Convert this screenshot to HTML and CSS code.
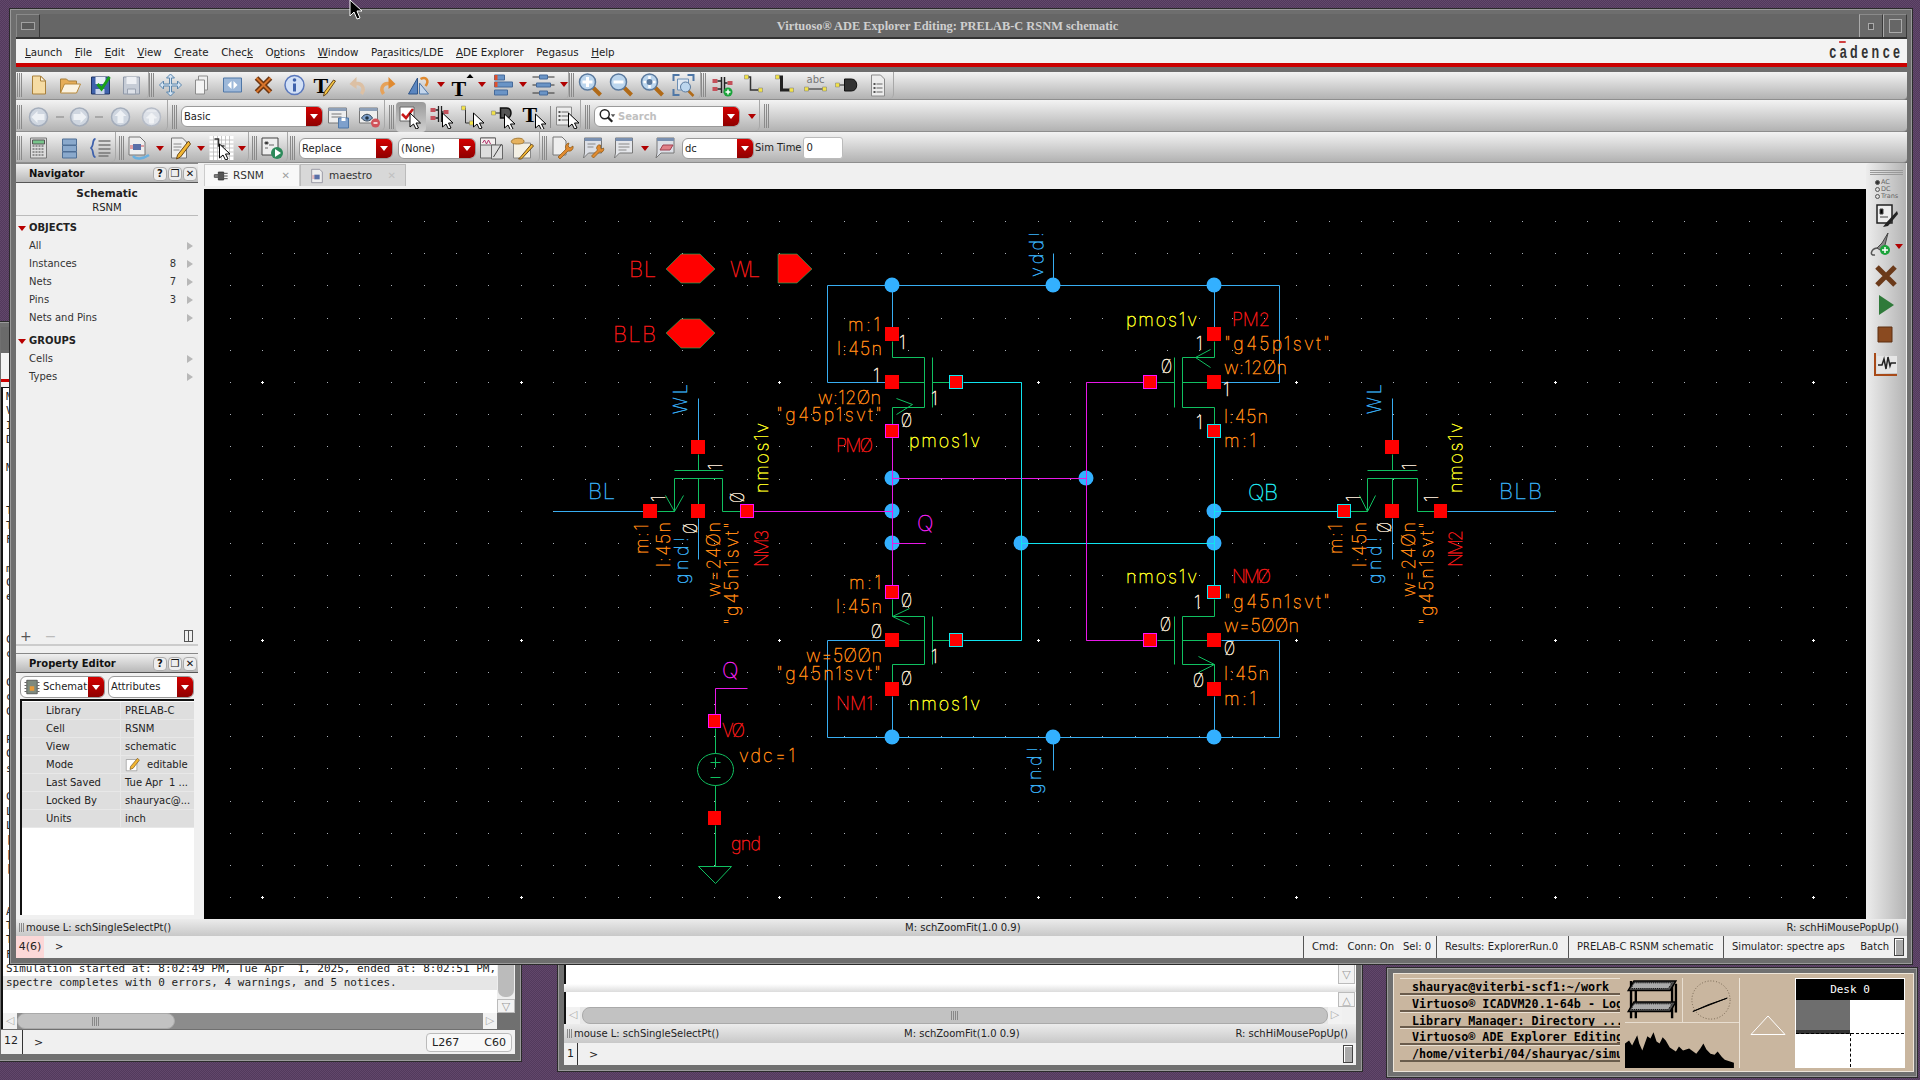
FILE: index.html
```html
<!DOCTYPE html>
<html lang="en">
<head>
<meta charset="utf-8">
<title>Virtuoso ADE Explorer Editing: PRELAB-C RSNM schematic</title>
<link rel="stylesheet" href="styles.css">
</head>
<body>
<svg class="defs" aria-hidden="true">
<symbol id="cur" viewBox="0 0 24 24"><path d="M11 8v14l3.500-3 2.500 5 2.500-1-2.500-5h4.500z" fill="#fff" stroke="#000"/></symbol>
<symbol id="new" viewBox="0 0 24 24"><path d="M6 3h8l5 5v13H6z" fill="#f6dca4" stroke="#a8803c"/><path d="M14 3v5h5z" fill="#fff6e0" stroke="#a8803c"/></symbol>
<symbol id="open" viewBox="0 0 24 24"><path d="M3 20V6h6l2 2h8v4H7z" fill="#e6ad58" stroke="#a8803c"/><path d="M3 20l4-9h16l-4 9z" fill="#fbf3e2" stroke="#b88a3c"/></symbol>
<symbol id="savec" viewBox="0 0 24 24"><path d="M3 4h18v17H3z" fill="#3f62ac" stroke="#1f3566"/><path d="M7 4h10v7H7z" fill="#e8eef8"/><path d="M7 21v-5h9v5z" fill="#c8d4ea"/><path d="M9 11l4 5 8-12" fill="none" stroke="#18a018" stroke-width="3"/></symbol>
<symbol id="saveg" viewBox="0 0 24 24"><path d="M4 4h16v17H4z" fill="#c6ccd6" stroke="#8f98a8"/><path d="M7 4h10v7H7z" fill="#eef0f4"/><path d="M8 21v-5h8v5z" fill="#dde1e8" stroke="#9aa2b0"/></symbol>
<symbol id="move" viewBox="0 0 24 24"><path d="M12 1l4 4h-3v6h6V8l4 4-4 4v-3h-6v6h3l-4 4-4-4h3v-6H5v3l-4-4 4-4v3h6V5H8z" fill="#d6e4f2" stroke="#5b86ad"/></symbol>
<symbol id="copy" viewBox="0 0 24 24"><path d="M9 3h9v14H9z" fill="#eee" stroke="#8c8c8c"/><path d="M6 7h9v14H6z" fill="#f4f4f4" stroke="#8c8c8c"/></symbol>
<symbol id="stretch" viewBox="0 0 24 24"><path d="M3 5h18v14H3z" fill="#9db8d9" stroke="#4f77a6"/><path d="M11 8v8l-4-4zM13 8v8l4-4z" fill="#fff"/></symbol>
<symbol id="del" viewBox="0 0 24 24"><path d="M5 5l14 14M19 5L5 19" stroke="#6b3410" stroke-width="5"/><path d="M5 5l14 14M19 5L5 19" stroke="#d9742a" stroke-width="2"/></symbol>
<symbol id="info" viewBox="0 0 24 24"><circle cx="12" cy="12" r="9.500" fill="#d2e0f6" stroke="#5a78bc" stroke-width="1.500"/><circle cx="12" cy="7" r="1.800" fill="#3f62ac"/><path d="M10.500 10.500h3v8h-3z" fill="#3f62ac"/></symbol>
<symbol id="tpen" viewBox="0 0 24 24"><text x="0" y="20" class="ict">T</text><path d="M22 8L13 21l-3 2 1-4 9-12z" fill="#f5c542" stroke="#6b4a1a"/></symbol>
<symbol id="undo" viewBox="0 0 24 24"><path d="M17 21c4-6 0-12-7-10" fill="none" stroke="#dcc0a4" stroke-width="3.500"/><path d="M12 4l-7 7 7 5z" fill="#dcc0a4"/></symbol>
<symbol id="redo" viewBox="0 0 24 24"><path d="M8 21c-4-6 0-12 7-10" fill="none" stroke="#e6a25a" stroke-width="3.500"/><path d="M13 4l7 7-7 5z" fill="#e08a30"/></symbol>
<symbol id="rot" viewBox="0 0 24 24"><path d="M2 21L11 5v16z" fill="#5a86c0" stroke="#2f5488"/><path d="M13 21V10l9 11z" fill="#c4d6ec" stroke="#4f77a6"/><path d="M14 6c6-3 9 2 5 7" fill="none" stroke="#e08a30" stroke-width="2.500"/></symbol>
<symbol id="tup" viewBox="0 0 24 24"><text x="2" y="23" class="ict">T</text><path d="M17 5l3.500-4L24 5z"/></symbol>
<symbol id="align" viewBox="0 0 24 24"><path d="M4 2h10v5H4z" fill="#6a94c6" stroke="#466a9a"/><path d="M4 9h18v5H4z" fill="#6a94c6" stroke="#466a9a"/><path d="M4 17h13v5H4z" fill="#6a94c6" stroke="#466a9a"/><path d="M4 2h3v5H4zM4 9h3v5H4z" fill="#e0502c"/></symbol>
<symbol id="dist" viewBox="0 0 24 24"><path d="M1 4h22M1 12h22M1 20h22" stroke="#333"/><path d="M8 2h8v4H8zM5 10h14v4H5zM8 18h8v4H8z" fill="#6a94c6" stroke="#466a9a"/></symbol>
<symbol id="zin" viewBox="0 0 24 24"><path d="M14 14l8 8" stroke="#b06a18" stroke-width="4"/><circle cx="9" cy="9" r="8" fill="#bcd6ee" stroke="#5b7a9e" stroke-width="1.500"/><path d="M4 9h10M9 4v10" stroke="#fff" stroke-width="3"/></symbol>
<symbol id="zout" viewBox="0 0 24 24"><path d="M14 14l8 8" stroke="#b06a18" stroke-width="4"/><circle cx="9" cy="9" r="8" fill="#bcd6ee" stroke="#5b7a9e" stroke-width="1.500"/><path d="M4 9h10" stroke="#fff" stroke-width="3"/></symbol>
<symbol id="zfit" viewBox="0 0 24 24"><path d="M14 14l8 8" stroke="#b06a18" stroke-width="4"/><circle cx="9" cy="9" r="8" fill="#bcd6ee" stroke="#5b7a9e" stroke-width="1.500"/><path d="M9 3v12M3 9h12" stroke="#fff" stroke-width="2.500"/><circle cx="9" cy="9" r="3" fill="#5b7a9e"/></symbol>
<symbol id="zbox" viewBox="0 0 24 24"><path d="M2 8V2h6M16 2h6v6M2 16v6h6" fill="none" stroke="#4f77a6" stroke-width="2"/><path d="M6 6h11v11H6z" fill="#dfe8f2" stroke="#6d8fb5"/><path d="M16 17l6 6" stroke="#b06a18" stroke-width="2.500"/><circle cx="14" cy="14" r="5" fill="#bcd6ee" stroke="#5b7a9e"/></symbol>
<symbol id="inst" viewBox="0 0 24 24"><path d="M2 6h5v4H2zM2 14h5v4H2zM17 8h5v4h-5z" fill="#c4505a"/><path d="M7 8h4v8H7M11 4v16M14 4v16M14 10h3" fill="none" stroke="#222" stroke-width="1.500"/><circle cx="17.500" cy="19" r="4.500" fill="#1aa33a"/><path d="M15 19h5M17.500 16.500v5" stroke="#fff" stroke-width="1.500"/></symbol>
<symbol id="wire" viewBox="0 0 24 24"><path d="M5 4h4v13h8" fill="none" stroke="#333" stroke-width="1.500"/><path d="M3 2h4v4H3zM17 15h4v4h-4z" fill="#f2e24a" stroke="#777" stroke-width=".5"/></symbol>
<symbol id="wirew" viewBox="0 0 24 24"><path d="M5 4h4v13h8" fill="none" stroke="#222" stroke-width="3"/><path d="M3 2h4v4H3zM17 15h4v4h-4z" fill="#f2e24a" stroke="#777" stroke-width=".5"/></symbol>
<symbol id="abc" viewBox="0 0 24 24"><text x="3" y="10" class="ics">abc</text><path d="M3 16h18" stroke="#222"/><path d="M1 14h4v4H1zM19 14h4v4h-4z" fill="#f2e24a" stroke="#777" stroke-width=".5"/></symbol>
<symbol id="pin" viewBox="0 0 24 24"><path d="M3 12h8" stroke="#222"/><path d="M1 10h4v4H1z" fill="#f2e24a" stroke="#777" stroke-width=".5"/><path d="M10 6h7c7 0 7 12 0 12h-7z" fill="#333" stroke="#111"/></symbol>
<symbol id="lst" viewBox="0 0 24 24"><path d="M6 2h9l4 4v17H6z" fill="#ececec" stroke="#8a8a8a"/><path d="M8 10h2v2H8zM8 14h2v2H8zM8 18h2v2H8z" fill="#555"/><path d="M11 11h6M11 15h6M11 19h6" stroke="#666"/></symbol>
<symbol id="navl" viewBox="0 0 24 24"><circle cx="12" cy="12" r="9" fill="#cfd6e0" stroke="#a4adbb" stroke-width="1.500"/><path d="M5 12l6-6v3h7v6h-7v3z" fill="#eef1f5"/></symbol>
<symbol id="navr" viewBox="0 0 24 24"><circle cx="12" cy="12" r="9" fill="#cfd6e0" stroke="#a4adbb" stroke-width="1.500"/><path d="M19 12l-6-6v3H6v6h7v3z" fill="#eef1f5"/></symbol>
<symbol id="navu" viewBox="0 0 24 24"><circle cx="12" cy="12" r="9" fill="#cfd6e0" stroke="#a4adbb" stroke-width="1.500"/><path d="M12 5l-6 6h3v7h6v-7h3z" fill="#eef1f5"/></symbol>
<symbol id="navt" viewBox="0 0 24 24"><circle cx="12" cy="12" r="9" fill="#dde1e8" stroke="#b6bcc7" stroke-width="1.500"/><path d="M7 6h10M12 8l-5 5h3v5h4v-5h3z" fill="#f1f3f6" stroke="#f1f3f6"/></symbol>
<symbol id="dash" viewBox="0 0 12 24"><path d="M2 12h8" stroke="#a8a8a8" stroke-width="2"/></symbol>
<symbol id="wsave" viewBox="0 0 24 24"><path d="M2 3h18v15H2z" fill="#eee" stroke="#777"/><path d="M2 3h18v3H2z" fill="#8ea0b8"/><path d="M5 9h10M5 12h10" stroke="#777"/><path d="M12 13h10v10H12z" fill="#7ea0cc" stroke="#4f77a6"/><path d="M15 13h4v3h-4z" fill="#fff"/></symbol>
<symbol id="weye" viewBox="0 0 24 24"><path d="M2 3h18v15H2z" fill="#eee" stroke="#777"/><path d="M2 3h18v3H2z" fill="#8ea0b8"/><path d="M4 13c3-5 8-5 11 0-3 4-8 4-11 0z" fill="#7ea0cc" stroke="#345"/><circle cx="9.500" cy="13" r="1.800" fill="#234"/><circle cx="18" cy="18" r="4.500" fill="#d0525a"/><path d="M16 18h4" stroke="#fff" stroke-width="1.500"/></symbol>
<symbol id="cchk" viewBox="0 0 24 24"><path d="M1 2h14v14H1z" fill="#fff" stroke="#666"/><path d="M3 9l4 4 7-9" fill="none" stroke="#c81818" stroke-width="2.500"/><use href="#cur" x="0" y="0" width="24" height="24"/></symbol>
<symbol id="cinst" viewBox="0 0 24 24"><path d="M1 3h5v4H1zM1 11h5v4H1zM14 5h5v4h-5z" fill="#c4505a"/><path d="M6 5h3v8H6M9 1v16M12 1v16M12 7h2" fill="none" stroke="#222" stroke-width="1.300"/><use href="#cur" x="2" y="0" width="24" height="24"/></symbol>
<symbol id="cwire" viewBox="0 0 24 24"><path d="M3 3h2v15h7" fill="none" stroke="#333"/><path d="M1 1h4v4H1zM9 16h4v4H9z" fill="#f2e24a" stroke="#777" stroke-width=".5"/><use href="#cur" x="2" y="0" width="24" height="24"/></symbol>
<symbol id="cpin" viewBox="0 0 24 24"><path d="M3 8h7" stroke="#222"/><path d="M0 6h4v4H0z" fill="#f2e24a" stroke="#777" stroke-width=".5"/><path d="M9 3h6c6 0 6 10 0 10H9z" fill="#555" stroke="#111" stroke-width="1.500"/><use href="#cur" x="2" y="1" width="24" height="24"/></symbol>
<symbol id="ct" viewBox="0 0 24 24"><text x="0" y="17" class="ict">T</text><use href="#cur" x="2" y="1" width="24" height="24"/></symbol>
<symbol id="clst" viewBox="0 0 24 24"><path d="M1 2h15v18H1z" fill="#ececec" stroke="#8a8a8a"/><path d="M3 6h2v2H3zM3 10h2v2H3zM3 14h2v2H3z" fill="#555"/><path d="M6 7h7M6 11h7M6 15h7" stroke="#666"/><use href="#cur" x="2" y="0" width="24" height="24"/></symbol>
<symbol id="sch" viewBox="0 0 24 24"><circle cx="9" cy="9" r="6" fill="#fff" stroke="#222" stroke-width="2"/><path d="M13 13l6 6" stroke="#222" stroke-width="3"/><path d="M17 9h6l-3 4z" fill="#555"/></symbol>
<symbol id="calc" viewBox="0 0 24 24"><path d="M4 2h16v20H4z" fill="#dcdcdc" stroke="#777"/><path d="M6 4h12v4H6z" fill="#77c48a" stroke="#555"/><path d="M6 10h12M6 13h12M6 16h12M6 19h12" stroke="#777" stroke-width="1.500" stroke-dasharray="2 1"/></symbol>
<symbol id="dbs" viewBox="0 0 24 24"><path d="M5 3h14v6H5zM5 9.500h14v6H5zM5 16h14v6H5z" fill="#8aa9cc" stroke="#4f6f95"/></symbol>
<symbol id="brace" viewBox="0 0 24 24"><path d="M7 3C3 3 6 11 2 12c4 1 1 9 5 9" fill="none" stroke="#3f62ac" stroke-width="1.800"/><path d="M10 5h12M10 9h12M10 13h12M10 17h12M10 20h10" stroke="#777" stroke-width="1.500"/></symbol>
<symbol id="nets" viewBox="0 0 24 24"><path d="M2 1h11l5 5v13H2z" fill="#eee" stroke="#777"/><path d="M6 8h8v6H6z" fill="#5a70a8"/><path d="M3 10h3M3 12h3M14 10h3" stroke="#d0505a"/><path d="M6 20c3 4 10 3 16-1" fill="none" stroke="#6ab0e0" stroke-width="2.500"/></symbol>
<symbol id="edit" viewBox="0 0 24 24"><path d="M3 2h11l4 4v16H3z" fill="#eee" stroke="#777"/><path d="M5 8h8M5 11h8M5 14h6" stroke="#888"/><path d="M20 5L9 19l-1 4 4-2L22 8z" fill="#f2b632" stroke="#6b4a1a"/></symbol>
<symbol id="grd" viewBox="0 0 24 24"><path d="M0 0h24v24H0z" fill="#fff"/><path d="M0 4h24M0 8h24M0 12h24M0 16h24M0 20h24M4 0v24M8 0v24M12 0v24M16 0v24M20 0v24" stroke="#b0b0b0" stroke-width=".7"/><path d="M5 3h4v7h6" fill="none" stroke="#333" stroke-width="1.500"/><use href="#cur" x="-1" y="0" width="24" height="24"/></symbol>
<symbol id="run" viewBox="0 0 24 24"><path d="M2 2h16v17H2z" fill="#eee" stroke="#444"/><path d="M5 6h3v2H5zM9 9h5M5 12h3" stroke="#666"/><circle cx="17" cy="17" r="6" fill="#2c8a5a"/><path d="M15 13l6 4-6 4z" fill="#fff"/></symbol>
<symbol id="wave2" viewBox="0 0 24 24"><path d="M1 2h15v20H1z" fill="#ddd" stroke="#666"/><path d="M1 2h15v7H1z" fill="#f4f0f0" stroke="#666"/><path d="M3 7l2-3 2 4 2-4 2 4" fill="none" stroke="#b0306a"/><path d="M12 9h11v14H12z" fill="#ddd" stroke="#666"/><path d="M14 21L22 8" stroke="#444"/></symbol>
<symbol id="note" viewBox="0 0 24 24"><path d="M3 7h17v15H3z" fill="#f4f0e4" stroke="#888"/><path d="M1 5c1-3 10-4 12-1s-2 4-6 4-7-1-6-3z" fill="#e6b25e" stroke="#a87c34"/><path d="M21 8L10 21l-2 2 3 0L23 10z" fill="#f2b632" stroke="#6b4a1a"/></symbol>
<symbol id="dwr" viewBox="0 0 24 24"><path d="M3 1h9l4 4v14H3z" fill="#eee" stroke="#777"/><path d="M19 7a4 4 0 0 0-3 6l-8 8 2 2 8-8a4 4 0 0 0 5-5l-3 2-2-2z" fill="#e08a30" stroke="#8a5410" stroke-width=".7"/></symbol>
<symbol id="cwr" viewBox="0 0 24 24"><path d="M5 2h17v15H9l-5 5 1-5z" fill="#dcdfe6" stroke="#777"/><path d="M5 2h17v3H5z" fill="#7a90b0"/><path d="M8 8h8M8 11h6" stroke="#888"/><path d="M21 9a3 3 0 0 0-3 5l-6 6 2 2 6-6a3 3 0 0 0 4-4l-2 1-1-1z" fill="#e08a30" stroke="#8a5410" stroke-width=".7"/></symbol>
<symbol id="cms" viewBox="0 0 24 24"><path d="M5 2h17v15H9l-5 5 1-5z" fill="#e4e6ea" stroke="#777"/><path d="M5 2h17v3H5z" fill="#7a90b0"/><path d="M8 8h11M8 11h11M8 14h8" stroke="#888"/></symbol>
<symbol id="cer" viewBox="0 0 24 24"><path d="M5 2h17v15H9l-5 5 1-5z" fill="#dcdfe6" stroke="#777"/><path d="M5 2h17v3H5z" fill="#7a90b0"/><path d="M8 14l3-5h10l-3 5z" fill="#e08088" stroke="#a04050"/></symbol>
<symbol id="plug" viewBox="0 0 24 24"><path d="M8 6h8v12H8z" fill="#555" stroke="#222"/><path d="M2 10h6v4H2zM16 8h6M16 12h6M16 16h6" stroke="#555" stroke-width="1.500" fill="#888"/></symbol>
<symbol id="mdoc" viewBox="0 0 24 24"><path d="M4 2h12l4 4v16H4z" fill="#eee" stroke="#778"/><path d="M8 10h8v7H8z" fill="#5a70a8"/><path d="M5 12h3M5 15h3" stroke="#d0505a"/></symbol>
<symbol id="chip" viewBox="0 0 24 24"><path d="M5 3h14v18H5z" fill="#7e8a7e" stroke="#444"/><path d="M9 11h6v6H9z" fill="#e89a3a"/><path d="M2 6h3M2 10h3M2 14h3M2 18h3M19 6h3M19 10h3M19 14h3M19 18h3" stroke="#666" stroke-width="1.500"/></symbol>
<symbol id="pen2" viewBox="0 0 24 24"><path d="M2 4h17v18H2z" fill="#fff" stroke="#888"/><path d="M20 2L9 15l-1 5 5-2L23 5z" fill="#f2b632" stroke="#6b4a1a"/></symbol>
<symbol id="redit" viewBox="0 0 24 24"><path d="M3 1h15v18H3z" fill="#eee" stroke="#222" stroke-width="1.500"/><path d="M6 5h3v5H6zM6 13h8" stroke="#444"/><path d="M23 7L12 19l-3 4 5-1 10-12z" fill="#222"/></symbol>
<symbol id="probe" viewBox="0 0 24 24"><path d="M19 1l-6 10-5 5 3 2 5-5z" fill="#888" stroke="#444"/><path d="M8 16c-6 1-8 8-2 7" fill="none" stroke="#555" stroke-width="1.500"/><circle cx="16" cy="18" r="5" fill="#1aa33a"/><path d="M13 18h6M16 15v6" stroke="#fff" stroke-width="1.500"/></symbol>
<symbol id="play" viewBox="0 0 24 24"><path d="M5 2l15 10-15 10z" fill="#2f7a3a"/></symbol>
<symbol id="stop" viewBox="0 0 24 24"><path d="M4 4h14v15H4z" fill="#8a4a20" stroke="#5c2e10"/></symbol>
<symbol id="xdel" viewBox="0 0 24 24"><path d="M3 3l18 18M21 3L3 21" stroke="#6b3a1a" stroke-width="5"/></symbol>
<symbol id="wav" viewBox="0 0 24 24"><path d="M1 1v22h22" fill="none" stroke="#a84a18" stroke-width="2"/><path d="M3 4h20v17H3z" fill="#e6e6e6"/><path d="M4 13h4l2-6 2 10 2-12 2 9 1-3h5" fill="none" stroke="#222" stroke-width="1.500"/></symbol>
<symbol id="rack" viewBox="0 0 56 44"><path d="M5 2v39M48 2v39M10 5v36M52 5v30" stroke="#000" stroke-width="2.500"/><path d="M8 2h44l-6 10H2zM8 24h44l-6 10H2z" fill="#555" stroke="#000" stroke-width="1.500"/><path d="M8 4h40l-4 6H5zM8 26h40l-4 6H5z" fill="#aaa" stroke="#000" stroke-dasharray="1 1"/></symbol>
<symbol id="clock" viewBox="0 0 54 44"><circle cx="27" cy="22" r="20" fill="none" stroke="#6e5e4c" stroke-dasharray="1 2"/><path d="M8 34L44 20 24 27z" fill="#000" stroke="#000"/></symbol>
<symbol id="load" viewBox="0 0 112 44"><path d="M0 44V20l4-3 3 5 5-10 2 8 3 7 5-14 3 2 3-6 3 9 3 2 3-6 3 3 4 7 6 4 3-5 4 4 6-2 7 5 4-5 3-5 3 6 4 4 4 1 3-3 4 5 3 3l9 3V44z"/></symbol>
<symbol id="triup" viewBox="0 0 36 20"><path d="M1 19.500L18 1l17 18.500z" fill="none" stroke="#fff"/></symbol>
</svg>

<section class="frame ciw">
  <div class="ciw-title"></div>
  <div class="ciw-menu"></div>
  <div class="ciw-red"></div>
  <div class="ciw-gap"></div>
  <div class="ciw-body">
    <pre class="ciw-text">M
V
I
D

M


T
T
F

m
C
e


C
c

C
c
C

P
C
s

C
L
L
[
[
[


A
T
T
F
Simulation started at: 8:02:49 PM, Tue Apr  1, 2025, ended at: 8:02:51 PM, Tue
<span class="hl">spectre completes with 0 errors, 4 warnings, and 5 notices.</span></pre>
    <div class="vbar">
      <div class="vtrack"><div class="vthumb"></div></div>
      <div class="vbtn">▽</div>
    </div>
  </div>
  <div class="hbar"><span class="hbtn">◁</span><div class="hthumb"><span class="hgrip"></span></div><span class="hbtn hbtn-end">▷</span></div>
  <div class="ciw-status"><span class="num">12</span><span class="prompt">&gt;</span><span class="pos"><span>L267</span><span>C60</span></span></div>
</section>

<section class="frame mid">
  <div class="mid-white"><div class="mid-area"></div><div class="mid-v"><span class="vbtn">▽</span></div></div>
  <div class="mid-sep"></div>
  <div class="mid-white2"><div class="mid-area"></div><div class="mid-v"><span class="vbtn vbtn-small">△</span></div></div>
  <div class="mid-h"><span class="hbtn">◁</span><div class="hthumb mid-thumb"><span class="hgrip"></span></div><span class="hbtn">▷</span><span class="mid-h-end"></span></div>
  <div class="status mid-status"><span class="st-l st-l-mid"><i class="sgrip"></i>mouse L: schSingleSelectPt()</span><span class="st-m">M: schZoomFit(1.0 0.9)</span><span class="st-r">R: schHiMousePopUp()</span></div>
  <div class="cmd mid-cmd"><span class="num">1</span><span class="prompt">&gt;</span><span class="fill"></span><i class="gauge"></i></div>
</section>

<section class="frame main">
  <header class="titlebar">
    <span class="tbtn"><i class="tbtn-wide"></i></span>
    <span class="title">Virtuoso® ADE Explorer Editing: PRELAB-C RSNM schematic</span>
    <span class="tbtn tbtn-r"><i class="tbtn-min"></i></span>
    <span class="tbtn tbtn-r"><i class="tbtn-max"></i></span>
  </header>
  <nav class="menubar">
    <span class="menus"><span><u>L</u>aunch</span><span><u>F</u>ile</span><span><u>E</u>dit</span><span><u>V</u>iew</span><span><u>C</u>reate</span><span>Chec<u>k</u></span><span>O<u>p</u>tions</span><span><u>W</u>indow</span><span>Pa<u>r</u>asitics/LDE</span><span><u>A</u>DE Explorer</span><span>Pegasus</span><span><u>H</u>elp</span></span>
    <span class="logo">cadence</span>
  </nav>
  <div class="redline"></div>

  <div class="toolrow r1">
    <div class="seg seg-a1"><i class="gr"></i><svg class="s"><use href="#new"/></svg><svg class="s"><use href="#open"/></svg><svg class="s"><use href="#savec"/></svg><svg class="s"><use href="#saveg"/></svg></div>
    <div class="seg seg-a2"><i class="gr"></i><svg class="s"><use href="#move"/></svg><svg class="s"><use href="#copy"/></svg><svg class="s"><use href="#stretch"/></svg><svg class="s"><use href="#del"/></svg><svg class="s"><use href="#info"/></svg><svg class="s"><use href="#tpen"/></svg><svg class="s"><use href="#undo"/></svg><svg class="s"><use href="#redo"/></svg><svg class="s"><use href="#rot"/></svg><i class="ar"></i><svg class="n"><use href="#tup"/></svg><i class="ar"></i><svg class="n"><use href="#align"/></svg><i class="ar"></i><svg class="n"><use href="#dist"/></svg><i class="ar"></i></div>
    <div class="seg seg-a3"><i class="gr"></i><svg class="s"><use href="#zin"/></svg><svg class="s"><use href="#zout"/></svg><svg class="s"><use href="#zfit"/></svg><svg class="s"><use href="#zbox"/></svg></div>
    <div class="seg seg-a4"><i class="gr"></i><svg class="s"><use href="#inst"/></svg><svg class="s"><use href="#wire"/></svg><svg class="s"><use href="#wirew"/></svg><svg class="s"><use href="#abc"/></svg><svg class="s"><use href="#pin"/></svg><svg class="s"><use href="#lst"/></svg></div>
  </div>

  <div class="toolrow r2">
    <div class="seg seg-b1"><i class="gr"></i><svg class="s"><use href="#navl"/></svg><svg class="d"><use href="#dash"/></svg><svg class="n"><use href="#navr"/></svg><svg class="d"><use href="#dash"/></svg><svg class="s"><use href="#navu"/></svg><svg class="s"><use href="#navt"/></svg></div>
    <div class="seg seg-b2"><i class="gr"></i><span class="combo c-basic"><span class="ctext">Basic</span><b class="cdrop"></b></span><svg class="s"><use href="#wsave"/></svg><svg class="s"><use href="#weye"/></svg></div>
    <div class="seg seg-b3"><i class="gr"></i><span class="sel"><svg class="s sel-i"><use href="#cchk"/></svg></span><svg class="s"><use href="#cinst"/></svg><svg class="s"><use href="#cwire"/></svg><svg class="s"><use href="#cpin"/></svg><svg class="s"><use href="#ct"/></svg><i class="vsep"></i><svg class="s"><use href="#clst"/></svg></div>
    <div class="seg seg-b4"><i class="gr"></i><span class="combo c-search"><svg class="sicon"><use href="#sch"/></svg><span class="ctext ghost">Search</span><b class="cdrop"></b></span><i class="ar ar-w"></i></div>
    <i class="gr gr-b"></i>
  </div>

  <div class="toolrow r3">
    <div class="seg seg-c1"><i class="gr"></i><svg class="s"><use href="#calc"/></svg><svg class="s"><use href="#dbs"/></svg><svg class="s"><use href="#brace"/></svg></div>
    <div class="seg seg-c2"><i class="gr"></i><svg class="s s-tight"><use href="#nets"/></svg><i class="ar"></i><svg class="n"><use href="#edit"/></svg><i class="ar"></i><svg class="n"><use href="#grd"/></svg><i class="ar"></i></div>
    <div class="seg seg-c3"><i class="gr"></i><svg class="s s-tight"><use href="#run"/></svg></div>
    <div class="seg seg-c4"><i class="gr"></i><span class="combo c-rep"><span class="ctext">Replace</span><b class="cdrop"></b></span><span class="combo c-none"><span class="ctext">(None)</span><b class="cdrop"></b></span><svg class="s"><use href="#wave2"/></svg><svg class="s"><use href="#note"/></svg></div>
    <div class="seg seg-c5"><i class="gr"></i><svg class="s s-tight"><use href="#dwr"/></svg><svg class="s"><use href="#cwr"/></svg><svg class="s"><use href="#cms"/></svg><i class="ar"></i><svg class="c24"><use href="#cer"/></svg><span class="combo c-dc"><span class="ctext">dc</span><b class="cdrop"></b></span><span class="simt">Sim Time</span><span class="inp">0</span></div>
  </div>

  <div class="dock">
    <aside class="left">
      <section class="nav">
        <div class="phead"><span class="ptitle">Navigator</span><span class="pbtns"><i>?</i><i>❐</i><i>✕</i></span></div>
        <div class="nhead"><b>Schematic</b><span>RSNM</span></div>
        <div class="ngroup"><i class="tri"></i>OBJECTS</div>
        <div class="nrow"><span>All</span><i class="go"></i></div>
        <div class="nrow"><span>Instances</span><em>8</em><i class="go"></i></div>
        <div class="nrow"><span>Nets</span><em>7</em><i class="go"></i></div>
        <div class="nrow"><span>Pins</span><em>3</em><i class="go"></i></div>
        <div class="nrow"><span>Nets and Pins</span><i class="go"></i></div>
        <div class="ngroup ngroup-2"><i class="tri"></i>GROUPS</div>
        <div class="nrow"><span>Cells</span><i class="go"></i></div>
        <div class="nrow"><span>Types</span><i class="go"></i></div>
        <div class="nfoot"><span class="plus">+</span><span class="minus">−</span><i class="split"></i></div>
      </section>
      <section class="prop">
        <div class="phead"><span class="ptitle">Property Editor</span><span class="pbtns"><i>?</i><i>❐</i><i>✕</i></span></div>
        <div class="pcombos">
          <span class="combo c-sch"><svg class="chip"><use href="#chip"/></svg><span class="ctext">Schemati</span><b class="cdrop"></b></span>
          <span class="combo c-attr"><span class="ctext">Attributes</span><b class="cdrop"></b></span>
        </div>
        <div class="ptable">
          <div class="prow"><span>Library</span><span>PRELAB-C</span></div>
          <div class="prow"><span>Cell</span><span>RSNM</span></div>
          <div class="prow"><span>View</span><span>schematic</span></div>
          <div class="prow"><span>Mode</span><span class="pmode"><svg class="pen"><use href="#pen2"/></svg>editable</span></div>
          <div class="prow"><span>Last Saved</span><span>Tue Apr  1 ...</span></div>
          <div class="prow"><span>Locked By</span><span>shauryac@...</span></div>
          <div class="prow"><span>Units</span><span>inch</span></div>
        </div>
      </section>
    </aside>

    <div class="center">
      <div class="tabs">
        <span class="tab tab-on"><svg class="ti"><use href="#plug"/></svg>RSNM<i class="tx">✕</i></span>
        <span class="tab tab-off"><svg class="ti"><use href="#mdoc"/></svg>maestro<i class="tx tx-off">✕</i></span>
      </div>
      <svg class="canvas" viewBox="204 189 1662 730" width="1662" height="730">
        <path id="dots" class="dots"/>
        <path id="majors" class="majors"/>
        <g class="w-g">
          <path d="M892 341V357H924V407H892V424M899 382H924M932 357V407M932 382H949"/>
          <path d="M896 398L912 404 896 414"/>
          <path d="M1214 341V357H1182V407H1214V424M1207 382H1182M1174 357V407M1174 382H1157"/>
          <path d="M1210 349L1195 357 1210 367"/>
          <path d="M892 599V616H924V664H892V682M899 640H924M932 616V664M932 640H949"/>
          <path d="M909 608L892 616 909 624"/>
          <path d="M1214 599V616H1182V664H1214V682M1207 640H1182M1174 616V664M1174 640H1157"/>
          <path d="M1198 656L1214 664 1198 672"/>
          <path d="M657 511H674V478H722V511H740M698 478V504M674 470H723M698 470V454M665 495L674 511 683 495"/>
          <path d="M1351 511H1367V478H1417V511H1434M1392 478V504M1367 470H1417M1392 470V454M1359 495L1367 511 1375 495"/>
          <path d="M715 728V753M715 785V811M715 825V866M698 866H731L715 883Z"/>
          <ellipse cx="715" cy="769" rx="18" ry="16"/>
          <path d="M710 762H720M715 757V767M710 777H720"/>
        </g>
        <g class="w-b">
          <path d="M827 382V285H1279V382M827 382H885M1053 253V285M892 285V327M1214 285V327M1221 382H1279"/>
          <path d="M827 640V737H1279V640M827 640H885M1221 640H1279M892 696V737M1214 696V737M1053 737V770"/>
          <path d="M553 511H643M698 398V440M698 518V559M1392 398V440M1392 518V559M1447 511H1554"/>
        </g>
        <g class="w-c">
          <path d="M963 382H1021V640H963M1021 543H1214M1214 438V585M1214 511H1351"/>
        </g>
        <g class="w-m">
          <path d="M892 438V585M892 478H1086M754 511H892M892 543H925M1143 382H1086V640H1143M715 714V688H747"/>
        </g>
        <g class="nodes">
          <circle cx="892" cy="285" r="7.500"/><circle cx="1053" cy="285" r="7.500"/><circle cx="1214" cy="285" r="7.500"/>
          <circle cx="892" cy="478" r="7.500"/><circle cx="892" cy="511" r="7.500"/><circle cx="892" cy="543" r="7.500"/>
          <circle cx="1086" cy="478" r="7.500"/><circle cx="1021" cy="543" r="7.500"/><circle cx="1214" cy="511" r="7.500"/><circle cx="1214" cy="543" r="7.500"/>
          <circle cx="892" cy="737" r="7.500"/><circle cx="1053" cy="737" r="7.500"/><circle cx="1214" cy="737" r="7.500"/>
        </g>
        <g class="w-o">
          <path d="M892 478H1086M892 511H754M892 543H925M892 438V585" class="over-m"/>
          <path d="M1021 382V640M1021 543H1214M1214 438V585M1214 511H1344" class="over-c"/>
          <path d="M1086 382V640" class="over-m"/>
        </g>
        <g class="pad">
          <rect x="885" y="327" width="14" height="14"/><rect x="885" y="375" width="14" height="14"/><rect x="1207" y="327" width="14" height="14"/><rect x="1207" y="375" width="14" height="14"/>
          <rect x="885" y="633" width="14" height="14"/><rect x="885" y="682" width="14" height="14"/><rect x="1207" y="633" width="14" height="14"/><rect x="1207" y="682" width="14" height="14"/>
          <rect x="643" y="504" width="14" height="14"/><rect x="691" y="504" width="14" height="14"/><rect x="691" y="440" width="14" height="14"/>
          <rect x="1385" y="504" width="14" height="14"/><rect x="1385" y="440" width="14" height="14"/><rect x="1434" y="504" width="13" height="14"/>
          <rect x="708" y="811" width="13" height="14"/>
        </g>
        <g class="pad pad-m">
          <rect x="885.500" y="424.500" width="13" height="13"/><rect x="740.500" y="504.500" width="13" height="13"/><rect x="885.500" y="585.500" width="13" height="13"/><rect x="1143.500" y="375.500" width="13" height="13"/><rect x="1143.500" y="633.500" width="13" height="13"/><rect x="708.500" y="714.500" width="12" height="13"/>
        </g>
        <g class="pad pad-c">
          <rect x="949.500" y="375.500" width="13" height="13"/><rect x="1207.500" y="424.500" width="13" height="13"/><rect x="1207.500" y="585.500" width="13" height="13"/><rect x="949.500" y="633.500" width="13" height="13"/><rect x="1337.500" y="504.500" width="13" height="13"/>
        </g>
        <g class="pintag">
          <path d="M666 269L681 254H700L715 269 700 283H681Z"/><path d="M778 254H797L812 269 797 283H778Z"/><path d="M666 333L681 319H700L715 333 700 348H681Z"/>
        </g>
        <g class="lab">
          <text class="r big" x="629" y="277" textLength="27">BL</text>
          <text class="r big" x="730" y="277" textLength="30">WL</text>
          <text class="r big" x="613" y="342" textLength="43">BLB</text>
          <text class="b" x="1043" y="277" textLength="45" transform="rotate(-90 1043 277)">vdd!</text>
          <text class="o" x="848" y="331" textLength="32">m:1</text>
          <text class="o" x="837" y="355" textLength="45">l:45n</text>
          <text class="t" x="899" y="349">1</text>
          <text class="t" x="873" y="382">1</text>
          <text class="o" x="818" y="404" textLength="63">w:12Øn</text>
          <text class="o" x="776" y="421" textLength="106">"g45p1svt"</text>
          <text class="t" x="931" y="405">1</text>
          <text class="t" x="901" y="427" textLength="11" lengthAdjust="spacingAndGlyphs">Ø</text>
          <text class="r" x="836" y="452" textLength="37">PMØ</text>
          <text class="y" x="909" y="447" textLength="71">pmos1v</text>
          <text class="y" x="768" y="493" textLength="70" transform="rotate(-90 768 493)">nmos1v</text>
          <text class="t" x="722" y="470" transform="rotate(-90 722 470)">1</text>
          <text class="t" x="665" y="502" transform="rotate(-90 665 502)">1</text>
          <text class="t" x="744" y="503" textLength="11" lengthAdjust="spacingAndGlyphs" transform="rotate(-90 744 503)">Ø</text>
          <text class="t" x="697" y="534" textLength="11" lengthAdjust="spacingAndGlyphs" transform="rotate(-90 697 534)">Ø</text>
          <text class="b big" x="588" y="499" textLength="27">BL</text>
          <text class="o" x="648" y="554" textLength="30" transform="rotate(-90 648 554)">m:1</text>
          <text class="o" x="670" y="567" textLength="45" transform="rotate(-90 670 567)">l:45n</text>
          <text class="b" x="688" y="584" textLength="47" transform="rotate(-90 688 584)">gnd!</text>
          <text class="o" x="720" y="597" textLength="75" transform="rotate(-90 720 597)">w=24Øn</text>
          <text class="o" x="738" y="625" textLength="103" transform="rotate(-90 738 625)">"g45n1svt"</text>
          <text class="r" x="768" y="567" textLength="37" transform="rotate(-90 768 567)">NM3</text>
          <text class="b" x="687" y="414" textLength="30" transform="rotate(-90 687 414)">WL</text>
          <text class="m big" x="917" y="531" textLength="15">Q</text>
          <text class="y" x="1126" y="326" textLength="71">pmos1v</text>
          <text class="r" x="1232" y="326" textLength="38">PM2</text>
          <text class="t" x="1196" y="350">1</text>
          <text class="o" x="1224" y="350" textLength="106">"g45p1svt"</text>
          <text class="t" x="1161" y="373" textLength="11" lengthAdjust="spacingAndGlyphs">Ø</text>
          <text class="o" x="1224" y="374" textLength="63">w:12Øn</text>
          <text class="t" x="1223" y="396">1</text>
          <text class="o" x="1224" y="423" textLength="44">l:45n</text>
          <text class="t" x="1196" y="429">1</text>
          <text class="o" x="1224" y="447" textLength="32">m:1</text>
          <text class="c big" x="1248" y="500" textLength="30">QB</text>
          <text class="b big" x="1499" y="499" textLength="43">BLB</text>
          <text class="b" x="1381" y="414" textLength="30" transform="rotate(-90 1381 414)">WL</text>
          <text class="y" x="1462" y="493" textLength="70" transform="rotate(-90 1462 493)">nmos1v</text>
          <text class="t" x="1416" y="470" transform="rotate(-90 1416 470)">1</text>
          <text class="t" x="1360" y="502" transform="rotate(-90 1360 502)">1</text>
          <text class="t" x="1438" y="502" transform="rotate(-90 1438 502)">1</text>
          <text class="t" x="1391" y="533" textLength="11" lengthAdjust="spacingAndGlyphs" transform="rotate(-90 1391 533)">Ø</text>
          <text class="o" x="1342" y="554" textLength="30" transform="rotate(-90 1342 554)">m:1</text>
          <text class="o" x="1366" y="567" textLength="45" transform="rotate(-90 1366 567)">l:45n</text>
          <text class="b" x="1381" y="584" textLength="47" transform="rotate(-90 1381 584)">gnd!</text>
          <text class="o" x="1415" y="597" textLength="75" transform="rotate(-90 1415 597)">w=24Øn</text>
          <text class="o" x="1433" y="625" textLength="103" transform="rotate(-90 1433 625)">"g45n1svt"</text>
          <text class="r" x="1462" y="567" textLength="37" transform="rotate(-90 1462 567)">NM2</text>
          <text class="o" x="849" y="589" textLength="32">m:1</text>
          <text class="t" x="901" y="607" textLength="11" lengthAdjust="spacingAndGlyphs">Ø</text>
          <text class="o" x="836" y="613" textLength="46">l:45n</text>
          <text class="t" x="871" y="638" textLength="11" lengthAdjust="spacingAndGlyphs">Ø</text>
          <text class="t" x="931" y="663">1</text>
          <text class="o" x="806" y="662" textLength="76">w=5ØØn</text>
          <text class="o" x="776" y="680" textLength="105">"g45n1svt"</text>
          <text class="t" x="901" y="685" textLength="11" lengthAdjust="spacingAndGlyphs">Ø</text>
          <text class="r" x="836" y="710" textLength="37">NM1</text>
          <text class="y" x="909" y="710" textLength="71">nmos1v</text>
          <text class="y" x="1126" y="583" textLength="71">nmos1v</text>
          <text class="r" x="1232" y="583" textLength="39">NMØ</text>
          <text class="t" x="1194" y="609">1</text>
          <text class="o" x="1224" y="608" textLength="106">"g45n1svt"</text>
          <text class="t" x="1160" y="631" textLength="11" lengthAdjust="spacingAndGlyphs">Ø</text>
          <text class="o" x="1224" y="632" textLength="75">w=5ØØn</text>
          <text class="t" x="1224" y="655" textLength="11" lengthAdjust="spacingAndGlyphs">Ø</text>
          <text class="t" x="1193" y="687" textLength="11" lengthAdjust="spacingAndGlyphs">Ø</text>
          <text class="o" x="1224" y="680" textLength="45">l:45n</text>
          <text class="o" x="1224" y="705" textLength="32">m:1</text>
          <text class="b" x="1041" y="794" textLength="47" transform="rotate(-90 1041 794)">gnd!</text>
          <text class="m big" x="722" y="678" textLength="15">Q</text>
          <text class="r" x="722" y="737" textLength="23">VØ</text>
          <text class="o" x="739" y="762" textLength="56">vdc=1</text>
          <text class="r" x="731" y="850" textLength="30">gnd</text>
        </g>
      </svg>
    </div>

    <aside class="rtools">
      <i class="rgrip"></i>
      <div class="radio"><span><i class="rad rad-on"></i>AC</span><span><i class="rad"></i>DC</span><span><i class="rad"></i>Trans</span></div>
      <svg class="ri ri-edit"><use href="#redit"/></svg>
      <div class="ri-row"><svg class="ri ri-probe"><use href="#probe"/></svg><i class="ar ar-r"></i></div>
      <svg class="ri"><use href="#xdel"/></svg>
      <svg class="ri"><use href="#play"/></svg>
      <svg class="ri"><use href="#stop"/></svg>
      <svg class="ri"><use href="#wav"/></svg>
    </aside>
  </div>

  <div class="status main-status"><span class="st-l"><i class="sgrip"></i>mouse L: schSingleSelectPt()</span><span class="st-m">M: schZoomFit(1.0 0.9)</span><span class="st-r">R: schHiMousePopUp()</span></div>
  <div class="cmd main-cmd">
    <span class="pink">4(6)</span><span class="prompt">&gt;</span><span class="fill"></span>
    <span class="cell c1"><span>Cmd:</span><span>Conn: On</span><span>Sel: 0</span></span>
    <span class="cell c2">Results: ExplorerRun.0</span>
    <span class="cell c3">PRELAB-C RSNM schematic</span>
    <span class="cell c4"><span>Simulator: spectre aps</span><span>Batch</span></span>
    <i class="gauge"></i>
  </div>
</section>

<section class="frame pager">
  <div class="pg-in">
    <div class="tasks">
      <div class="task">shauryac@viterbi-scf1:~/work_</div>
      <div class="task">Virtuoso® ICADVM20.1-64b - Log</div>
      <div class="task">Library Manager: Directory ...</div>
      <div class="task">Virtuoso® ADE Explorer Editing</div>
      <div class="task">/home/viterbi/04/shauryac/simu</div>
    </div>
    <div class="pg-mon">
      <div class="pg-top"><span class="pg-cell"><svg class="rack"><use href="#rack"/></svg></span><span class="pg-cell"><svg class="clock"><use href="#clock"/></svg></span></div>
      <div class="pg-load"><svg class="load"><use href="#load"/></svg></div>
    </div>
    <div class="pg-tri"><svg class="tri-up"><use href="#triup"/></svg></div>
    <div class="desk">
      <div class="desk-h">Desk 0</div>
      <div class="desk-map"><i class="dk-win"></i><i class="dk-h"></i><i class="dk-v"></i></div>
    </div>
  </div>
</section>

<svg class="pointer" viewBox="0 0 14 22" aria-hidden="true"><path d="M1 0v16l4-4 3 7 3-1-3-7h5z" fill="#000" stroke="#fff"/></svg>
<script src="grid.js"></script>
</body>
</html>
```
FILE: styles.css
```css
*{box-sizing:border-box}
html,body{margin:0;padding:0}
body{position:relative;width:1920px;height:1080px;overflow:hidden;background-color:#5a4063;background-image:conic-gradient(#523a5c 25%,#62476b 0 50%,#523a5c 0 75%,#62476b 0);background-size:2px 2px;font:10px/1 "DejaVu Sans",sans-serif;color:#222}
i,em{font-style:normal}
svg{display:block;flex:none}
.defs{position:absolute;width:0;height:0;overflow:hidden}
.ict{font:bold 22px "Liberation Serif",serif;fill:#000}
.ics{font:10px "DejaVu Sans",sans-serif;fill:#777}

.frame{position:absolute;background:#707070;border:1px solid #2b2b2b;box-shadow:inset 0 0 0 1px #9a9a9a;display:flex;flex-direction:column}

/* windows */
.main{left:9px;top:8px;width:1904px;height:957px;padding:5px 5px 6px 6px;background:#6e6e6e;z-index:3}
.ciw{left:-6px;top:321px;width:528px;height:741px;padding:5px 6px 7px;z-index:1}
.mid{left:557px;top:900px;width:806px;height:172px;padding:6px;z-index:1}
.pager{left:1386px;top:967px;width:532px;height:111px;padding:5px 3px 5px 6px;z-index:1}

/* CIW */
.ciw-title{height:26px;background:#6a6a6a}
.ciw-menu{height:26px;background:#f2f2f2}
.ciw-red{height:3px;background:#cc0000}
.ciw-gap{height:5px;background:#f2f2f2}
.ciw-body{flex:1;display:flex;background:#fff;border-top:1px solid #111;border-left:2px solid #111;min-height:0}
.ciw-text{flex:1;margin:0;padding:2px 0 0 3px;overflow:hidden;font:11px/14.3px "DejaVu Sans Mono",monospace;color:#222;white-space:pre;min-width:0}
.hl{display:block;background:#e6e6e6;margin-left:-3px;padding-left:3px}
.vbar{width:18px;display:flex;flex-direction:column;background:#f0f0f0}
.vtrack{flex:1;position:relative;background:#eee}
.vthumb{position:absolute;left:1px;right:1px;top:0;bottom:2px;background:#bbb;border-radius:0 0 7px 7px}
.vbtn{display:block;height:14px;font-size:11px;line-height:14px;text-align:center;color:#9a9a9a;background:#f2f2f2;border:1px solid #bbb}
.hbar{height:16px;display:flex;align-items:stretch;background:#8c8c8c;margin-right:18px;border-left:2px solid #111}
.hbtn{width:14px;background:#f2f2f2;color:#aaa;font-size:11px;line-height:15px;text-align:center;flex:none}
.hbtn-end{margin-left:auto}
.hthumb{width:158px;background:#c2c2c2;border-radius:8px;display:flex;align-items:center;justify-content:center;border:1px solid #aaa}
.hgrip{width:8px;height:9px;background:repeating-linear-gradient(90deg,#888 0 1px,transparent 1px 2px)}
.ciw-status{height:24px;margin-top:1px;background:#f0f0f0;display:flex;align-items:center;font-size:11px;position:relative}
.num{width:22px;padding-left:3px;height:100%;line-height:22px;border-right:1px solid #333;flex:none}
.prompt{margin-left:11px;flex:none}
.pos{margin-left:auto;margin-right:3px;width:86px;height:19px;display:flex;justify-content:space-between;align-items:center;padding:0 5px;border:1px solid #bbb;border-radius:4px;background:#f8f8f8}

/* middle window */
.mid-white{flex:1;display:flex;background:#fff;min-height:0}
.mid-white2{height:15px;display:flex;background:#fff}
.mid-area{flex:1;border-left:2px solid #111}
.mid-v{width:17px;margin-right:1px;display:flex;flex-direction:column;justify-content:flex-end;background:#f0f0f0}
.mid-v .vbtn{height:20px;line-height:20px}
.mid-v .vbtn-small{height:15px;line-height:15px}
.mid-sep{height:8px;background:linear-gradient(#fff,#dcdcdc)}
.mid-h{height:17px;display:flex;background:#e8e8e8;border-left:2px solid #111}
.mid-thumb{width:746px;flex:none;margin-left:2px}
.mid-h-end{flex:1;background:#f0f0f0}

/* main window */
.titlebar{height:25px;flex:none;display:flex;background:#666;border-bottom:2px solid #333}
.tbtn{width:24px;flex:none;display:flex;align-items:center;justify-content:center;border:1px solid #8a8a8a;border-right-color:#3a3a3a;border-bottom:none;background:#696969}
.tbtn-wide{width:14px;height:8px;border:1px solid #a0a0a0;background:#5a5a5a}
.tbtn-min{width:6px;height:7px;border:1px solid #aaa;background:#555}
.tbtn-max{width:13px;height:14px;border:1px solid #aaa;background:#666}
.tbtn-r{border-left-color:#aaa}
.title{flex:1;text-align:center;font:bold 12.400px/25px "Liberation Serif",serif;color:#cfcfcf;padding-right:4px}
.menubar{height:24px;flex:none;background:#f3f3f3;display:flex;align-items:center;justify-content:space-between;padding:0 8px 0 9px}
.menus{display:flex;gap:12.600px;margin-top:2px;font-size:10.300px}
.logo{position:relative;font:bold 19px/19px "Liberation Sans",sans-serif;letter-spacing:5.200px;color:#333;transform:scaleX(.66);transform-origin:right center;margin-right:-4px;margin-top:1px}
.logo::before{content:"";position:absolute;left:15px;top:-1px;width:10px;height:2px;background:#d04040}
.redline{height:4px;flex:none;background:#cc0000;margin-bottom:5px}

.toolrow{display:flex;align-items:center;flex:none;background:linear-gradient(#f3f3f3,#b2b2b2);border-bottom:1px solid #8e8e8e;border-radius:0 0 4px 0}
.r1{height:28px}
.r2{height:32px}
.r3{height:31px}
.seg{display:flex;align-items:center;height:100%;border-right:1px solid #a8a8a8;border-radius:0 0 5px 0;padding-left:1px}
.r1 .seg{padding-bottom:2px}
.r2 .seg,.r3 .seg{padding-top:2px}
.gr{width:5px;height:24px;margin:0 1px 0 0;flex:none;background:repeating-linear-gradient(90deg,#8a8a8a 0 1px,transparent 1px 2px)}
.s{width:31px;height:24px}
.n{width:27px;height:24px}
.d{width:12px;height:24px}
.c24{width:24px;height:24px}
.ar{width:14px;height:24px;flex:none;display:flex;align-items:center;justify-content:center}
.ar::before{content:"";border:4.500px solid transparent;border-top:5px solid #b00000;border-bottom:0}
.seg-a1{width:133px}
.seg-a2{width:420px;padding-left:0}
.seg-a3{width:132px;padding-left:0}
.seg-a4{padding-left:0}
.seg-b1{width:152px}
.seg-b2{width:217px}
.seg-b2 .gr{margin-left:3px}
.seg-b3{width:196px}
.seg-b3 .gr{margin-left:3px}
.seg-b4{width:179px}
.seg-b4 .gr{margin-left:3px}
.gr-b{margin-left:4px}
.seg-c1{width:100px}
.seg-c2{width:133px}
.seg-c2 .gr{margin-left:2px}
.s-tight{width:28px}
.seg-c3{width:39px}
.seg-c3 .gr{margin-left:2px}
.seg-c4{width:252px}
.seg-c4 .gr{margin-left:1px}
.seg-c5{flex:1;border-right:none}
.seg-c5 .gr{margin-left:1px}
.sel{width:30px;height:30px;margin-left:1px;background:linear-gradient(#9a9a9a,#d0d0d0);border-radius:4px;display:flex;align-items:center;justify-content:center;flex:none}
.sel-i{width:28px}
.vsep{width:1px;height:22px;background:#8a8a8a;flex:none;margin:0 1px 0 0}
.combo{display:flex;align-items:stretch;background:#fff;border:1px solid #9a9a9a;border-radius:6px;height:21px;overflow:hidden;flex:none;position:relative}
.ctext{flex:1;padding-left:2px;line-height:19px;white-space:nowrap;overflow:hidden;color:#222;font-size:10px}
.ghost{color:#c0c0c0;font-weight:bold}
.cdrop{width:16px;flex:none;background:linear-gradient(#d40000,#8e0000);display:flex;align-items:center;justify-content:center}
.cdrop::before{content:"";border:4px solid transparent;border-top:5px solid #fff;border-bottom:0}
.c-basic{width:142px;margin-left:3px}
.c-search{width:146px;margin-left:3px}
.sicon{width:18px;height:19px;margin-left:3px}
.ar-w{width:24px}
.c-rep{width:94px;margin-left:3px}
.c-none{width:78px;margin-left:5px;margin-right:0}
.c-dc{width:72px;margin-left:6px}
.simt{margin-left:1px;white-space:nowrap}
.inp{width:40px;height:22px;margin-left:1px;background:#fff;border:1px solid #bbb;border-radius:3px;padding-left:3px;line-height:20px;flex:none}

/* dock */
.dock{flex:1;display:flex;min-height:0;background:#f0f0f0}
.left{width:182px;flex:none;margin-right:6px;display:flex;flex-direction:column}
.nav{height:483px;flex:none;background:#f0f0f0;display:flex;flex-direction:column;border-bottom:2px solid #ccc}
.phead{height:20px;flex:none;display:flex;align-items:center;justify-content:space-between;padding:1px 1px 0 13px;background:linear-gradient(#f0f0f0,#b8b8b8);border-bottom:1px solid #555;border-top:1px solid #888}
.ptitle{font-weight:bold;color:#111;white-space:nowrap}
.pbtns{display:flex;gap:1px}
.pbtns i{width:14px;height:14px;background:#eee;border:1px solid #aaa;border-radius:4px;text-align:center;font-size:10px;line-height:12px;color:#111;font-weight:bold}
.nhead{height:33px;flex:none;display:flex;flex-direction:column;align-items:center;padding-top:5px;gap:4px;border-bottom:1px solid #bbb;margin-bottom:3px}
.nhead b{font-size:10.500px;line-height:11px}
.ngroup{height:17px;flex:none;display:flex;align-items:center;font-weight:bold;padding:1px 0 0 2px;color:#222}
.ngroup-2{margin-top:6px}
.tri{width:0;height:0;border:4px solid transparent;border-top:5px solid #b80000;border-bottom:0;margin:1px 3px 0 0}
.nrow{height:18px;flex:none;display:flex;align-items:center;padding:1px 5px 0 13px;color:#333}
.nrow span{flex:1}
.nrow em{margin-right:11px}
.go{width:0;height:0;border:4px solid transparent;border-left:6px solid #b8b8b8;border-right:0}
.nfoot{margin-top:auto;height:17px;flex:none;display:flex;align-items:center;padding:0 5px 0 4px;font-size:14px;color:#555}
.minus{margin-left:13px;color:#bbb}
.split{margin-left:auto;width:9px;height:12px;border:1px solid #555;background:linear-gradient(90deg,transparent 3px,#555 3px 4px,transparent 4px)}
.prop{margin-top:7px;flex:1;display:flex;flex-direction:column;background:#f0f0f0}
.pcombos{height:26px;flex:none;display:flex;align-items:center;gap:3px;padding:2px 0 0 4px}
.c-sch{width:85px;height:22px}
.c-attr{width:86px;height:22px}
.chip{width:18px;height:20px;margin-left:2px}
.ptable{margin:0 4px 4px;flex:1;background:#fff;border-top:2px solid #111;border-left:2px solid #111;padding-top:1px}
.prow{height:18px;display:flex;align-items:center;background:#dedede;border-bottom:1px solid #e8e8e8;color:#222}
.prow span:first-child{width:99px;padding-left:24px;border-right:1px solid #e8e8e8;height:100%;line-height:17px;flex:none}
.prow span:last-child{padding-left:4px;white-space:pre}
.pmode{display:flex;align-items:center}
.pen{width:15px;height:15px;margin-right:7px}

.center{width:1662px;flex:none;display:flex;flex-direction:column}
.tabs{height:26px;flex:none;display:flex;background:#f0f0f0;padding-top:1px;border-bottom:3px solid #f0f0f0;box-shadow:inset 0 -1px 0 #f0f0f0}
.tab{display:flex;align-items:center;height:22px;font-size:10.500px;color:#333;position:relative}
.tab-on{width:96px;background:#f8f8f8;padding-left:8px;border:1px solid #ccc;border-bottom:none}
.tab-off{width:106px;background:#d8d8d8;padding-left:8px;border:1px solid #bbb;border-bottom:none;margin-top:0}
.ti{width:16px;height:16px;margin-right:4px}
.tx{position:absolute;right:9px;color:#a0a0a0;font-size:10px;font-weight:bold}
.tx-off{color:#c0c0c0}
.canvas{background:#000;width:1662px;height:730px}
.dots{stroke:#aab0b8;stroke-width:1;shape-rendering:crispEdges;fill:none}
.majors{stroke:#fff;stroke-width:1;shape-rendering:crispEdges;fill:none}
.w-g,.w-b,.w-c,.w-m,.w-o{fill:none;stroke-width:1;transform:translate(.5px,.5px)}
.w-g{stroke:#10c060}
.w-b{stroke:#38aef2}
.w-c{stroke:#10e4f0}
.w-m{stroke:#e818e8}
.over-m{stroke:#e818e8}
.over-c{stroke:#10e4f0}
.nodes{fill:#33b0ff}
.pad{fill:#ff0000}
.pad-m{stroke:#ff10ff;stroke-width:1}
.pad-c{stroke:#10e8f0;stroke-width:1}
.pintag{fill:#ff0000;stroke:#14c060;stroke-width:.6}
.lab text{font-family:Inter,"DejaVu Sans",sans-serif;font-weight:100;font-size:18px;fill:currentColor;stroke:currentColor;stroke-width:.45px}
.lab .big{font-size:22px}
.o{color:#ff8a14}
.r{color:#f01818}
.y{color:#ffff20}
.b{color:#38aef2}
.c{color:#20e8f0}
.m{color:#f020f0}
.t{color:#ffeedc}

.rtools{width:40px;flex:none;background:linear-gradient(90deg,#ededed,#b4b4b4);display:flex;flex-direction:column;align-items:center;border-radius:4px 0 0 4px;margin-left:0;padding-top:7px}
.rgrip{width:33px;height:5px;background:repeating-linear-gradient(#999 0 1px,transparent 1px 2px)}
.radio{display:flex;flex-direction:column;gap:1px;font-size:6.500px;color:#666;margin:4px 0 0 0;width:30px;align-self:flex-start;margin-left:9px}
.radio span{display:flex;align-items:center;gap:1px;height:6px}
.rad{width:5px;height:5px;border:1px solid #555;border-radius:50%;flex:none}
.rad-on{background:#333}
.ri{width:24px;height:24px;margin-bottom:5.600px}
.ri-edit{margin-top:5px;margin-bottom:4px}
.ri-row{display:flex;align-items:center;width:40px;padding-left:3px;margin-bottom:2px}
.ar-r{width:11px}
.status{height:17px;flex:none;display:flex;align-items:center;background:linear-gradient(#ececec,#c8c8c8)}
.sgrip{width:6px;height:9px;margin:0 1px 0 3px;background:repeating-linear-gradient(90deg,#888 0 1px,transparent 1px 2px);flex:none}
.st-l{display:flex;align-items:center;width:889px;flex:none}
.st-m{flex:1}
.st-r{padding-right:8px}
.st-l-mid{width:340px}
.mid-status{height:19px}
.cmd{height:22px;flex:none;display:flex;align-items:center;background:#f0f0f0;font-size:10px}
.pink{width:28px;height:100%;line-height:22px;text-align:center;background:#fcd8d8;font-size:11px}
.fill{flex:1}
.cell{height:100%;border-left:1px solid #555;padding-left:8px;display:flex;align-items:center;white-space:nowrap;flex:none}
.c1{width:133px;gap:9px}
.c2{width:132px}
.c3{width:155px}
.c4{width:171px;justify-content:space-between;padding-right:5px}
.gauge{width:10px;height:18px;margin-right:3px;background:#aaa;border:1px solid #444;box-shadow:inset 1px 1px 0 #fff;flex:none}
.mid-cmd .num{width:14px}
.mid-cmd{font-size:11px}

/* pager */
.pg-in{flex:1;display:flex;background:#c9b69f;border:1px solid #eee6da;padding:4px 8px 3px 6px}
.tasks{width:220px;flex:none;display:flex;flex-direction:column;margin-right:5px}
.task{height:16.800px;flex:none;padding-left:12px;overflow:hidden;white-space:nowrap;font:bold 11.700px/16px "DejaVu Sans Mono",monospace;color:#000;letter-spacing:0;border-top:1px solid #ece2d4;border-bottom:2px solid #6a5c4c}
.pg-mon{width:114px;flex:none;display:flex;flex-direction:column;gap:1px;background:#e8ded0}
.pg-top{display:flex;gap:1px;height:44px}
.pg-cell{flex:1;background:#c9b69f;display:flex;align-items:center;justify-content:center}
.rack{width:54px;height:42px}
.clock{width:52px;height:42px}
.pg-load{flex:1;background:#c9b69f}
.load{width:114px;height:45px}
.pg-tri{width:56px;flex:none;display:flex;align-items:center;justify-content:center;border-left:1px solid #eee6da}
.tri-up{width:36px;height:20px;margin-top:4px}
.desk{flex:1;display:flex;flex-direction:column;border:1px solid #fff}
.desk-h{height:21px;flex:none;background:#000;color:#fff;font:11px/21px "DejaVu Sans Mono",monospace;text-align:center}
.desk-map{flex:1;background:#fff;position:relative}
.dk-win{position:absolute;left:0;top:0;width:54px;height:34px;background:#6e6e6e;border-bottom:4px solid #333}
.dk-h{position:absolute;left:0;right:0;top:33px;border-top:1px dashed #000}
.dk-v{position:absolute;left:54px;top:33px;bottom:0;border-left:1px dashed #000}

.pointer{position:absolute;left:349px;top:0;width:14px;height:22px;z-index:9}
```
FILE: grid.js
```js
(function () {
  var minor = "", major = "";
  for (var x = 262 - 32.32; x < 1866; x += 32.32) {
    for (var y = 382 - 32.2 * 5; y < 919; y += 32.2) {
      minor += "M" + Math.round(x) + " " + (Math.round(y) + 0.5) + "h1";
    }
  }
  for (var mx = 262; mx < 1866; mx += 258.56) {
    for (var my = 382; my < 919; my += 257.6) {
      var ax = Math.round(mx), ay = Math.round(my);
      major += "M" + (ax - 1) + " " + (ay + 0.5) + "h3M" + (ax + 0.5) + " " + (ay - 1) + "v3";
    }
  }
  document.getElementById("dots").setAttribute("d", minor);
  document.getElementById("majors").setAttribute("d", major);
})();
```
